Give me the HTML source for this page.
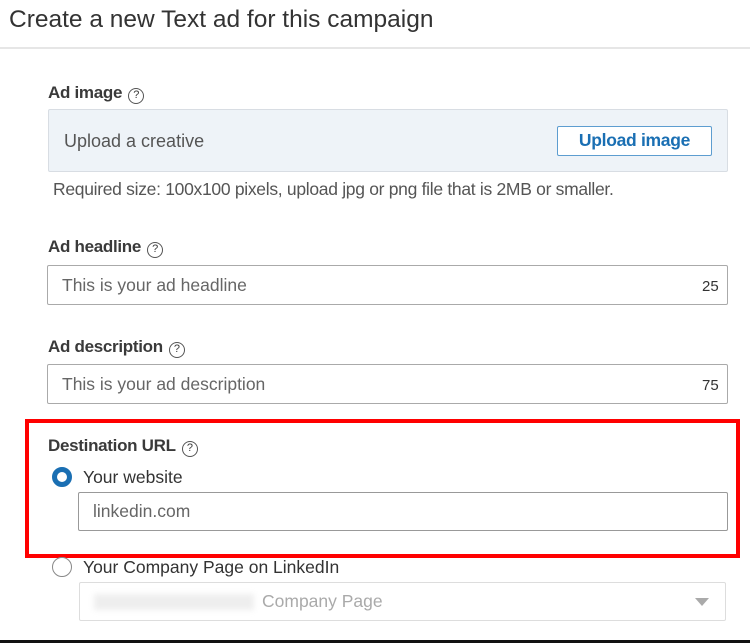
<!DOCTYPE html>
<html><head><style>
*{margin:0;padding:0;box-sizing:border-box}
body{width:750px;height:643px;background:#fff;position:relative;overflow:hidden;font-family:"Liberation Sans",sans-serif;color:#333}
.a{position:absolute}
.lbl{font-size:17px;font-weight:bold;color:#3a3a3a;letter-spacing:-0.3px}
.q{display:inline-block;width:16px;height:16px;border:1.5px solid #555;border-radius:50%;font-size:11px;text-align:center;line-height:13px;font-weight:normal;vertical-align:0px;margin-left:6px}
.inp{border:1px solid #aaa;border-radius:2px;background:#fff;font-size:17.5px;color:#666;padding-left:14px;display:flex;align-items:center}
</style></head><body>
<div class="a" style="left:9px;top:6px;font-size:24.5px;color:#333">Create a new Text ad for this campaign</div>
<div class="a" style="left:0;top:47px;width:750px;height:2px;background:#e6e6e6"></div>

<div class="a lbl" style="left:48px;top:83px">Ad image<span class="q">?</span></div>
<div class="a" style="left:48px;top:109px;width:680px;height:63px;background:#eef3f8;border:1px solid #d8dde3;border-radius:2px"></div>
<div class="a" style="left:64px;top:131px;font-size:18px;color:#555">Upload a creative</div>
<div class="a" style="left:557px;top:126px;width:155px;height:30px;border:1.5px solid #5d9dd0;border-radius:2px;background:#fff;color:#1a6fb3;font-weight:bold;font-size:17.5px;text-align:center;line-height:27px;letter-spacing:-0.3px">Upload image</div>
<div class="a" style="left:53px;top:179px;font-size:17.5px;color:#555;letter-spacing:-0.3px">Required size: 100x100 pixels, upload jpg or png file that is 2MB or smaller.</div>

<div class="a lbl" style="left:48px;top:237px">Ad headline<span class="q">?</span></div>
<div class="a inp" style="left:47px;top:265px;width:681px;height:40px">This is your ad headline</div>
<div class="a" style="left:702px;top:278px;font-size:15px;color:#333">25</div>

<div class="a lbl" style="left:48px;top:337px">Ad description<span class="q">?</span></div>
<div class="a inp" style="left:47px;top:364px;width:681px;height:40px">This is your ad description</div>
<div class="a" style="left:702px;top:377px;font-size:15px;color:#333">75</div>

<div class="a" style="left:25px;top:419px;width:715px;height:139px;border:4px solid #f00"></div>
<div class="a lbl" style="left:48px;top:436px">Destination URL<span class="q">?</span></div>
<div class="a" style="left:52px;top:467px;width:20px;height:20px;border:5px solid #1a6fb3;border-radius:50%;background:#fff"></div>
<div class="a" style="left:83px;top:467px;font-size:17.5px;color:#333">Your website</div>
<div class="a inp" style="left:78px;top:492px;width:650px;height:39px;border-color:#999">linkedin.com</div>

<div class="a" style="left:52px;top:557px;width:20px;height:20px;border:1.5px solid #888;border-radius:50%;background:#fff"></div>
<div class="a" style="left:83px;top:557px;font-size:17.5px;color:#333">Your Company Page on LinkedIn</div>
<div class="a inp" style="left:79px;top:582px;width:647px;height:39px;border-color:#ddd;color:#aaa"><span style="display:inline-block;width:160px;height:16px;background:#eee;filter:blur(3px);margin-right:8px"></span>Company Page</div>
<div class="a" style="left:695px;top:598px;width:0;height:0;border-left:7px solid transparent;border-right:7px solid transparent;border-top:8px solid #aaa"></div>
<div class="a" style="left:0;top:640px;width:750px;height:3px;background:#111"></div>
</body></html>
